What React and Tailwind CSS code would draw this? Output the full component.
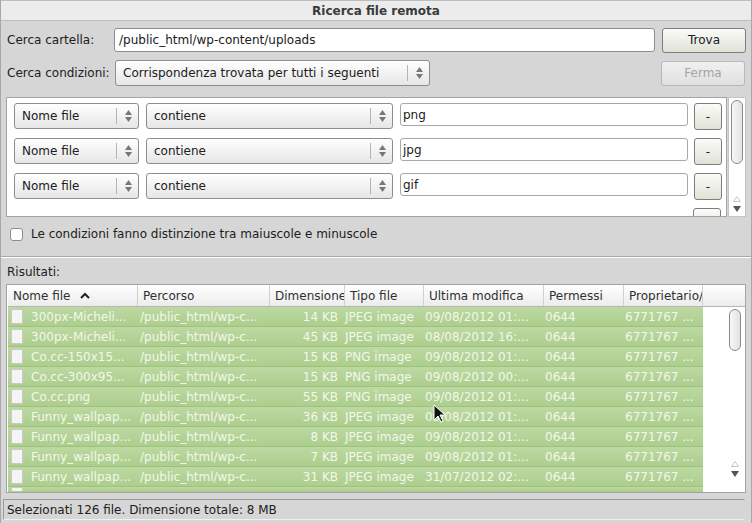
const rows = [
  ['300px-Micheli...', '14 KB', 'JPEG image', '09/08/2012 01:...'],
  ['300px-Micheli...', '45 KB', 'JPEG image', '08/08/2012 16:...'],
  ['Co.cc-150x15...', '15 KB', 'PNG image', '09/08/2012 01:...'],
  ['Co.cc-300x95...', '15 KB', 'PNG image', '09/08/2012 00:...'],
  ['Co.cc.png', '55 KB', 'PNG image', '09/08/2012 01:...'],
  ['Funny_wallpap...', '36 KB', 'JPEG image', '09/08/2012 01:...'],
  ['Funny_wallpap...', '8 KB', 'JPEG image', '09/08/2012 01:...'],
  ['Funny_wallpap...', '7 KB', 'JPEG image', '09/08/2012 01:...'],
  ['Funny_wallpap...', '31 KB', 'JPEG image', '31/07/2012 02:...'],
];

const conditions = ['png', 'jpg', 'gif'];

function Spin() {
  return (
    <span className="flex flex-col items-center justify-center gap-[2px] border-l border-[#b4b4b4] pl-[8px] pr-[6px] h-[16px]">
      <svg width="7" height="5" viewBox="0 0 7 5"><path d="M3.5 0L7 5H0z" fill="#777" /></svg>
      <svg width="7" height="5" viewBox="0 0 7 5"><path d="M0 0h7L3.5 5z" fill="#777" /></svg>
    </span>
  );
}

function Select({ label, className = '' }) {
  return (
    <div className={`flex items-center justify-between h-[26px] rounded-[3px] border border-[#8e8e8e] bg-gradient-to-b from-white to-[#e6e6e6] pl-[7px] ${className}`}>
      <span className="text-[#202020] truncate">{label}</span>
      <Spin />
    </div>
  );
}

function Button({ children, disabled = false, className = '' }) {
  return (
    <div
      className={`flex items-center justify-center h-[25px] rounded-[3px] border ${
        disabled
          ? 'border-[#b8b8b8] text-[#a4a4a4] bg-gradient-to-b from-[#f0f0f0] to-[#e0e0e0]'
          : 'border-[#7d7d7d] text-[#202020] bg-gradient-to-b from-[#fbfbf8] to-[#dfe3d6]'
      } ${className}`}
    >
      {children}
    </div>
  );
}

function VScroll({ thumb, className = '' }) {
  return (
    <div className={`flex flex-col items-center justify-between bg-white border border-[#c4c4c4] py-[2px] ${className}`}>
      <div className={`w-[12px] ${thumb} rounded-full border border-[#8a8a8a] bg-gradient-to-r from-[#f8f8f8] to-[#e2e2e2]`} />
      <div className="flex flex-col items-center gap-[4px] pb-[2px]">
        <svg width="8" height="6" viewBox="0 0 8 6"><path d="M4 0.5L7.5 5.5H0.5z" fill="none" stroke="#c8c8c8" /></svg>
        <svg width="8" height="6" viewBox="0 0 8 6"><path d="M0 0h8L4 6z" fill="#555" /></svg>
      </div>
    </div>
  );
}

export default function App() {
  return (
    <div
      className="relative w-[752px] h-[523px] bg-[#d6d6d6] flex flex-col text-[12px] text-[#202020] border-x border-[#a8a8a8] overflow-hidden"
      style={{ fontFamily: '"DejaVu Sans", Verdana, sans-serif' }}
    >
      <div className="h-[21px] shrink-0 flex items-center justify-center bg-[#ececec] border-t border-b border-[#bdbdbd] font-bold text-[#3a3a3a]">
        Ricerca file remota
      </div>

      <div className="flex flex-col px-[5px]">
        <div className="flex items-center mt-[7px] h-[24px]">
          <span className="w-[108px] pl-[1px]">Cerca cartella:</span>
          <div className="w-[541px] h-[24px] flex items-center bg-white border border-[#8e8e8e] rounded-[3px] px-[4px]">
            /public_html/wp-content/uploads
          </div>
          <Button className="ml-[7px] w-[84px]">Trova</Button>
        </div>

        <div className="flex items-center mt-[8px] h-[26px]">
          <span className="w-[109px] pl-[1px]">Cerca condizioni:</span>
          <Select label="Corrispondenza trovata per tutti i seguenti" className="w-[315px]" />
          <Button disabled className="ml-auto mr-[1px] w-[84px]">Ferma</Button>
        </div>

        <div className="flex mt-[11px] h-[120px]">
          <div className="w-[721px] bg-white border border-[#a4a4a4] pl-[7px] pt-[5px] flex flex-col gap-[9px] overflow-hidden">
            {conditions.map((c) => (
              <div key={c} className="flex items-start shrink-0 h-[26px]">
                <Select label="Nome file" className="w-[125px]" />
                <Select label="contiene" className="ml-[7px] w-[247px]" />
                <div className="ml-[7px] w-[288px] h-[23px] flex items-center bg-white border border-[#a8a8a8] rounded-[3px] px-[2px]">
                  {c}
                </div>
                <Button className="ml-[6px] w-[28px] h-[27px]">-</Button>
              </div>
            ))}
            <div className="flex shrink-0 h-[26px] pl-[679px]">
              <div className="w-[28px] h-[27px] rounded-[3px] border border-[#7d7d7d] bg-gradient-to-b from-[#fbfbf8] to-[#dfe3d6]" />
            </div>
          </div>
          <VScroll thumb="h-[64px]" className="ml-[1px] w-[18px]" />
        </div>

        <div className="flex items-center mt-[10px] h-[14px] pl-[4px]">
          <span className="w-[13px] h-[13px] rounded-[3px] border border-[#8e8e8e] bg-white" />
          <span className="ml-[8px]">Le condizioni fanno distinzione tra maiuscole e minuscole</span>
        </div>

        <div className="mt-[15px] border-t border-[#a9a9a9] border-b-white border-b h-[2px] -mx-[5px]" />

        <div className="mt-[7px] h-[14px] flex items-center pl-[1px]">Risultati:</div>

        <div className="mt-[5px] h-[209px] bg-white border border-[#a4a4a4] flex flex-col overflow-hidden">
          <div className="h-[22px] shrink-0 grid grid-cols-[130px_132px_75px_79px_120px_80px_79px] bg-gradient-to-b from-white to-[#ececec] border-b border-[#b6b6b6] ml-[1px]">
            {['Nome file', 'Percorso', 'Dimensione', 'Tipo file', 'Ultima modifica', 'Permessi', 'Proprietario/'].map((h, i) => (
              <div key={h} className="flex items-center border-r border-[#d0d0d0] pl-[5px] overflow-hidden whitespace-nowrap text-[#303030]">
                {h}
                {i === 0 && (
                  <svg className="ml-[10px]" width="10" height="7" viewBox="0 0 10 7">
                    <path d="M1 6L5 2l4 4" fill="none" stroke="#222" strokeWidth="2" />
                  </svg>
                )}
              </div>
            ))}
          </div>
          <div className="flex flex-1 overflow-hidden">
            <div className="w-[695px] ml-[1px] flex flex-col overflow-hidden">
              {rows.map((r, i) => (
                <div
                  key={i}
                  className="h-[20px] shrink-0 grid grid-cols-[130px_132px_75px_79px_120px_80px_79px] items-center bg-gradient-to-b from-[#bcd9a1] to-[#adce8e] border-b border-[#9dc27b] text-[#f3f7ec] whitespace-nowrap"
                >
                  <div className="flex items-center pl-[3px]">
                    <span className="w-[12px] h-[15px] bg-[#f4f4f4] border border-[#c9c9c9]" />
                    <span className="ml-[8px]">{r[0]}</span>
                  </div>
                  <div className="pl-[2px]">/public_html/wp-c...</div>
                  <div className="text-right pr-[7px]">{r[1]}</div>
                  <div>{r[2]}</div>
                  <div className="pl-[1px]">{r[3]}</div>
                  <div className="pl-[1px]">0644</div>
                  <div className="pl-[1px]">6771767 ...</div>
                </div>
              ))}
              <div className="flex-1 bg-gradient-to-b from-[#bcd9a1] to-[#adce8e] flex items-start pl-[3px]">
                <span className="w-[12px] h-[4px] bg-[#f4f4f4] border border-[#c9c9c9] border-b-0" />
              </div>
            </div>
            <div className="flex-1" />
            <VScroll thumb="h-[42px]" className="w-[18px] h-[174px] mr-[1px] border-none" />
          </div>
        </div>
      </div>

      <div className="mt-[6px] ml-[2px] h-[21px] flex items-center border border-[#9a9a9a] border-r-[#d6d6d6] border-b-[#f0f0f0] pl-[3px] mr-[6px]">
        Selezionati 126 file. Dimensione totale: 8 MB
      </div>

      <svg className="absolute left-[432px] top-[404px]" width="14" height="20" viewBox="0 0 14 20">
        <path d="M1 1v15l4-4 3 6 2-1-3-6h5z" fill="#111" stroke="#fff" strokeWidth="1" />
      </svg>
    </div>
  );
}
